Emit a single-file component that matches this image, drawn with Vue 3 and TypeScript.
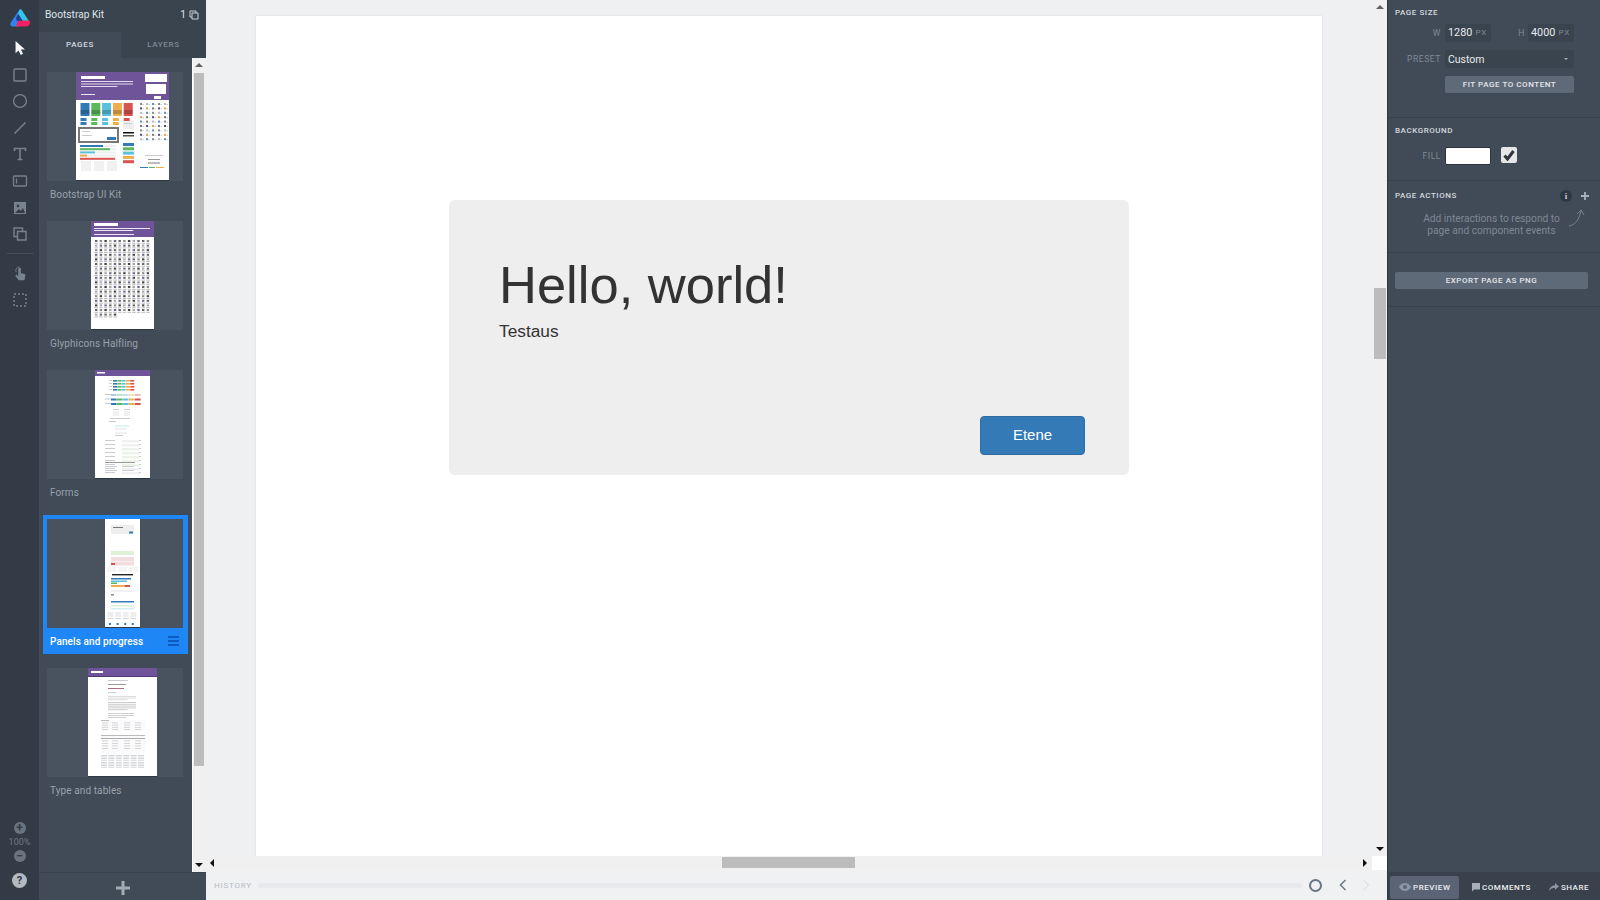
<script setup lang="ts">
type Box = [number, number, number, number, string];

type PageItem = {
  name: string;
  width: number;
  boxes: Box[];
  selected?: boolean;
};

const PURPLE = '#6f5499';
const BLUE = '#337ab7';
const GREEN = '#5cb85c';
const CYAN = '#5bc0de';
const ORANGE = '#f0ad4e';
const RED = '#d9534f';
const LINE = '#c9ccd1';
const PALE = '#f1f1f1';

function lines(x: number, y: number, w: number, count: number, step: number, color: string): Box[] {
  const out: Box[] = [];
  for (let i = 0; i < count; i++) {
    out.push([x, y + i * step, i === count - 1 ? w * 0.7 : w, 1, color]);
  }
  return out;
}

function kitThumb(): Box[] {
  const out: Box[] = [
    [0, 0, 93, 28, PURPLE],
    [5, 4, 24, 3, '#ffffff'],
    ...lines(5, 9, 52, 3, 2.5, '#e4dcf0'),
    [5, 22, 14, 1, '#efe9f6'],
    [69, 2, 22, 8, '#ffffff'],
    [70, 12, 20, 10, '#ffffff'],
    [78, 24, 7, 3, '#ffffff'],
  ];
  [BLUE, GREEN, CYAN, ORANGE, RED].forEach((color, i) => {
    const x = 4.5 + i * 10.8;
    out.push([x, 31, 9, 13, color], [x, 38, 9, 4, '#00000033']);
    out.push([x, 46, 6, 3, color], [x, 50, 6, 3, color]);
  });
  out.push(
    [2, 55, 41, 16, '#777777'],
    [4, 57, 37, 12, '#ffffff'],
    [6, 59, 8, 1, LINE],
    [6, 63, 10, 1, LINE],
    [31, 65, 9, 3, BLUE],
  );
  const bars: [string, number][] = [[BLUE, 23], [GREEN, 30], [CYAN, 15], [ORANGE, 7], [RED, 35]];
  bars.forEach(([color, w], i) => {
    out.push([4, 73 + i * 3.2, 36, 2, '#eeeeee'], [4, 73 + i * 3.2, w, 2, color]);
  });
  out.push([5, 89, 10, 10, PALE], [18, 89, 10, 10, PALE], [31, 89, 10, 10, PALE]);
  out.push([47, 49, 11, 8, '#eeeeee'], [48, 51, 8, 1, LINE], [47, 60, 11, 1.5, '#111111'], [47, 63, 11, 1.5, '#555555']);
  [BLUE, GREEN, CYAN, ORANGE, RED].forEach((color, i) => {
    out.push([47, 71 + i * 4.3, 11, 3, color]);
  });
  const dots = ['#888888', '#5a4a80', '#bbbbbb', '#d9a54e', '#5b90c0', '#777777'];
  for (let row = 0; row < 9; row++) {
    for (let col = 0; col < 5; col++) {
      out.push([64 + col * 6, 31 + row * 4.4, 2, 2, dots[(row + col * 2) % dots.length]]);
      out.push([66.5 + col * 6, 32 + row * 4.4, 1.5, 1, LINE]);
    }
  }
  out.push(
    [69, 83, 18, 1, LINE],
    [72, 87, 12, 1, '#999999'],
    [72, 90, 12, 2, '#bbbbbb'],
    [64, 95, 8, 1, BLUE],
    [73, 95, 6, 1, GREEN],
    [80, 95, 8, 1, ORANGE],
  );
  return out;
}

function glyphThumb(): Box[] {
  const out: Box[] = [
    [0, 0, 63, 16, PURPLE],
    [3, 2, 24, 3, '#ffffff'],
    ...lines(3, 7, 56, 2, 2, '#ede7f5'),
    [3, 13, 40, 1, '#ede7f5'],
  ];
  const colors = ['#666666', '#8b8b8b', '#444444', '#a5a5a5', '#70688a'];
  for (let row = 0; row < 17; row++) {
    const cols = row === 16 ? 5 : 12;
    for (let col = 0; col < cols; col++) {
      out.push([4 + col * 4.7, 19 + row * 4.6, 2.4, 2, colors[(row * 3 + col) % colors.length]]);
      out.push([3.5 + col * 4.7, 21.8 + row * 4.6, 3.6, 1, '#b9b9b9']);
    }
  }
  return out;
}

function formsThumb(): Box[] {
  const out: Box[] = [[0, 0, 55, 6, PURPLE], [2, 2, 8, 1.5, '#ffffff']];
  const row = [BLUE, GREEN, CYAN, ORANGE, RED];
  for (let r = 0; r < 4; r++) {
    out.push([14, 10 + r * 3, 3, 1, LINE]);
    row.forEach((color, i) => out.push([18 + i * 4.3, 10 + r * 3, 4, 1.6, color]));
  }
  for (let r = 0; r < 3; r++) {
    out.push([10, 24 + r * 4.5, 6, 1, LINE]);
    row.forEach((color, i) => out.push([16 + i * 6, 24 + r * 4.5, 5.6, 2, r === 0 ? color + '66' : color]));
  }
  out.push(
    [18, 39, 6, 1, LINE], [18, 41, 6, 5, PALE], [29, 39, 6, 1, LINE], [29, 41, 6, 5, PALE],
    [15, 48, 20, 1, LINE], [14, 51, 7, 1, LINE], [20, 55, 14, 2, '#e3f2fa'], [20, 58, 12, 2, PALE],
    [20, 62, 12, 2, PALE], [20, 65, 8, 1, LINE],
  );
  for (let r = 0; r < 9; r++) {
    out.push([10, 70 + r * 4, 10, 1, LINE]);
    out.push([27, 70 + r * 4, 18, 2.4, r > 1 && r < 7 ? '#ecf3e8' : PALE]);
    out.push([44, 70 + r * 4, 2, 1, LINE]);
  }
  out.push([10, 92, 30, 1, '#999999'], [10, 96, 12, 1, LINE], [27, 96, 12, 1, LINE], [10, 100, 12, 1, LINE], [27, 100, 12, 1, LINE]);
  return out;
}

function panelsThumb(): Box[] {
  const out: Box[] = [
    [6, 6, 23, 9, '#eeeeee'],
    [8, 8, 10, 1, '#777777'],
    [24, 12.5, 4, 2, BLUE],
    [6, 32, 23, 4, '#dff0d8'],
    [6, 38, 23, 4, '#f2dede'],
    [6, 42.5, 23, 4, '#f2dede'],
    [6, 44, 4, 2, RED],
    [2, 48, 9, 5, '#f5f5f5'],
    [13, 48, 9, 5, '#f5f5f5'],
    [24, 48, 9, 5, '#f5f5f5'],
    [7, 55, 21, 1.4, '#222222'],
    [6, 59, 20, 1.5, BLUE],
    [6, 61.5, 16, 1.5, CYAN],
    [6, 63.5, 6, 1.5, GREEN],
    [6, 66, 14, 2, ORANGE],
    [20, 66, 5, 2, RED],
    [6, 71, 23, 2, PALE],
    [6, 75, 3, 1.5, '#888888'],
    [6, 82, 23, 1.5, BLUE],
    [6, 86, 23, 1.5, '#dff0d8'],
    [6, 89, 23, 1.5, '#d9edf7'],
  ];
  for (let i = 0; i < 4; i++) {
    out.push([2.5 + i * 7.6, 93, 6, 5, '#eeeeee'], [2.5 + i * 7.6, 99, 6, 0.8, LINE], [4 + i * 7.6, 104, 2, 2, BLUE]);
  }
  return out;
}

function tablesThumb(): Box[] {
  const out: Box[] = [
    [0, 0, 69, 8, PURPLE],
    [0, 8, 69, 1, '#4f3b75'],
    [3, 3, 12, 2, '#ffffff'],
    [20, 12, 20, 1, LINE],
    [20, 16, 18, 1, '#999999'],
    [20, 20, 16, 1, '#b06a8a'],
    [20, 24, 8, 1, LINE],
    ...lines(20, 28, 28, 3, 1.6, '#dddddd'),
    ...lines(20, 34, 28, 5, 1.8, '#cccccc'),
    ...lines(20, 45, 26, 3, 2, '#cfcfcf'),
    [13, 52, 44, 11, '#fafafa'],
    [13, 52, 8, 1, '#bbbbbb'],
    [13, 67, 44, 18, '#fafafa'],
    [13, 67, 44, 1, '#bbbbbb'],
    [13, 70, 44, 1, '#aaaaaa'],
  ];
  for (let r = 0; r < 4; r++) {
    [14, 24, 36, 47].forEach((x) => out.push([x, 54.5 + r * 2.2, 6, 0.8, LINE]));
    [14, 24, 36, 47].forEach((x) => out.push([x, 72.5 + r * 2.5, 6, 0.8, LINE]));
  }
  for (let block = 0; block < 2; block++) {
    for (let c = 0; c < 6; c++) {
      for (let r = 0; r < 4; r++) {
        out.push([13 + c * 7.4, 87 + block * 7 + r * 1.6, 6, 0.8, LINE]);
      }
    }
  }
  return out;
}

const pages: PageItem[] = [
  { name: 'Bootstrap UI Kit', width: 93, boxes: kitThumb() },
  { name: 'Glyphicons Halfling', width: 63, boxes: glyphThumb() },
  { name: 'Forms', width: 55, boxes: formsThumb() },
  { name: 'Panels and progress', width: 35, boxes: panelsThumb(), selected: true },
  { name: 'Type and tables', width: 69, boxes: tablesThumb() },
];
</script>

<template>
  <div class="app">
    <nav class="rail">
      <svg class="logo" viewBox="0 0 20 18" aria-hidden="true">
        <path d="M9.2 1 .8 13.6C-.4 15.6.8 17.5 3 17.5h5.5L13.5 6.2 11.6 1.6C11 .4 9.9.2 9.2 1Z" fill="#2f84f2" />
        <path d="M9.4.9c.9-1 2-.7 2.6.3l7 11H12.6L8 5Z" fill="#35c3e8" />
        <path d="M8 11.5h10.5c1.4 0 1.8 1.5 1.3 3-.6 1.8-1.9 3-3.8 3H6Z" fill="#f2215f" />
        <path d="M8.3 5 12.6 11.8H6.5L6.2 8.5Z" fill="#1e3f8a" />
      </svg>

      <div class="rail-tools">
        <svg viewBox="0 0 16 18" class="tool"><path d="M3 1v14l3.4-3.2 2.4 5 2.6-1.2-2.4-4.8h4.6Z" fill="#f4f6f8" /></svg>
        <svg viewBox="0 0 16 16" class="tool"><rect x="2" y="2" width="12" height="12" rx="1" fill="none" stroke="#788390" stroke-width="1.4" /></svg>
        <svg viewBox="0 0 16 16" class="tool"><circle cx="8" cy="8" r="6.4" fill="none" stroke="#788390" stroke-width="1.4" /></svg>
        <svg viewBox="0 0 16 16" class="tool"><path d="M2.5 13.5 13.5 2.5" stroke="#788390" stroke-width="1.5" fill="none" /></svg>
        <svg viewBox="0 0 16 16" class="tool"><path d="M2.5 5V2.5h11V5M8 2.5v11M5.5 13.5h5" stroke="#788390" stroke-width="1.6" fill="none" /></svg>
        <svg viewBox="0 0 16 16" class="tool"><rect x="1.5" y="3" width="13" height="10" rx="1" fill="none" stroke="#788390" stroke-width="1.3" /><path d="M4.5 5.5v5" stroke="#788390" stroke-width="1.3" /></svg>
        <svg viewBox="0 0 16 16" class="tool"><rect x="2" y="2" width="12" height="12" fill="#788390" /><circle cx="6" cy="6" r="1.4" fill="#323b46" /><path d="M3 13l4-4 2 2 2-3 2 5Z" fill="#323b46" /></svg>
        <svg viewBox="0 0 16 16" class="tool"><path d="M5.5 10.5H2V2h8.5v3.5M5.5 5.5H14V14H5.5Z" fill="none" stroke="#788390" stroke-width="1.4" /></svg>
      </div>
      <div class="rail-divider"></div>
      <div class="rail-tools rail-tools--lower">
        <svg viewBox="0 0 16 18" class="tool"><path d="M6 7V3.5a1.5 1.5 0 0 1 3 0V8l4 1c.8.2 1.2.9 1 1.7L13 16H6.5L3 11.5c-.6-1.4.8-2.2 1.8-1.3L6 11.5Z" fill="#788390" /><path d="M3.8 7A4 4 0 0 1 7.5 1" fill="none" stroke="#788390" stroke-width="1" /></svg>
        <svg viewBox="0 0 16 16" class="tool"><rect x="2" y="2" width="12" height="12" fill="none" stroke="#788390" stroke-width="1.5" stroke-dasharray="2 2" /></svg>
      </div>

      <div class="zoom">
        <span class="zoom-btn">+</span>
        <span class="zoom-value">100%</span>
        <span class="zoom-btn">&minus;</span>
      </div>
      <span class="help">?</span>
    </nav>

    <aside class="pages">
      <header class="pages-title">
        <span>Bootstrap Kit</span>
        <span class="pages-count">
          1
          <svg viewBox="0 0 10 10" aria-hidden="true"><path d="M3 7H1V1h6v2M3 3h6v6H3Z" fill="none" stroke="#c8cdd3" stroke-width="1" /></svg>
        </span>
      </header>
      <div class="tabs">
        <span class="tab tab--active">PAGES</span>
        <span class="tab">LAYERS</span>
      </div>
      <div class="pages-body">
        <ul class="page-list">
          <li
            v-for="page in pages"
            :key="page.name"
            class="page-item"
            :class="{ 'page-item--selected': page.selected }"
          >
            <div class="page-thumb">
              <svg :width="page.width" height="108" :viewBox="`0 0 ${page.width} 108`" aria-hidden="true">
                <rect :width="page.width" height="108" fill="#ffffff" />
                <g class="thumb-content">
                  <rect
                    v-for="(b, i) in page.boxes"
                    :key="i"
                    :x="b[0]"
                    :y="b[1]"
                    :width="b[2]"
                    :height="b[3]"
                    :fill="b[4]"
                  />
                </g>
              </svg>
            </div>
            <div class="page-name">
              <span>{{ page.name }}</span>
              <span v-if="page.selected" class="page-menu"><i></i><i></i><i></i></span>
            </div>
          </li>
        </ul>
        <div class="vbar vbar--list">
          <span class="arrow arrow--up"></span>
          <span class="vbar-thumb"></span>
          <span class="arrow arrow--down"></span>
        </div>
      </div>
      <footer class="pages-add">
        <svg viewBox="0 0 16 16" aria-hidden="true"><path d="M8 1v14M1 8h14" stroke="#a2aab4" stroke-width="3" /></svg>
      </footer>
    </aside>

    <main class="stage">
      <div class="stage-scroll">
        <div class="viewport">
          <section class="canvas-page">
            <div class="jumbotron">
              <h1>Hello, world!</h1>
              <p>Testaus</p>
              <button type="button" class="btn-primary">Etene</button>
            </div>
          </section>
        </div>
        <div class="vbar vbar--stage">
          <span class="arrow arrow--up"></span>
          <span class="vbar-thumb"></span>
          <span class="arrow arrow--down"></span>
        </div>
        <div class="hbar">
          <span class="arrow arrow--left"></span>
          <span class="hbar-thumb"></span>
          <span class="arrow arrow--right"></span>
        </div>
        <div class="corner"></div>
      </div>
      <div class="history">
        <span class="history-label">HISTORY</span>
        <span class="history-track"></span>
        <span class="history-dot"></span>
        <svg viewBox="0 0 8 12" class="history-nav"><path d="M6.5 1 1.5 6l5 5" fill="none" stroke="#6f7a88" stroke-width="1.5" /></svg>
        <svg viewBox="0 0 8 12" class="history-nav"><path d="M1.5 1l5 5-5 5" fill="none" stroke="#e3e5e8" stroke-width="1.5" /></svg>
      </div>
    </main>

    <aside class="inspector">
      <div class="inspector-body">
        <section class="group group--size">
          <h3>PAGE SIZE</h3>
          <div class="size-row">
            <label class="field-label">W</label>
            <span class="input"><b>1280</b><em>PX</em></span>
            <label class="field-label field-label--h">H</label>
            <span class="input"><b>4000</b><em>PX</em></span>
          </div>
          <div class="field-row">
            <label class="field-label">PRESET</label>
            <span class="select">Custom<i></i></span>
          </div>
          <div class="field-row">
            <span class="field-label"></span>
            <button type="button" class="panel-btn panel-btn--fit">FIT PAGE TO CONTENT</button>
          </div>
        </section>

        <section class="group group--bg">
          <h3>BACKGROUND</h3>
          <div class="field-row">
            <label class="field-label">FILL</label>
            <span class="swatch"></span>
            <span class="check">
              <svg viewBox="0 0 12 12" aria-hidden="true"><path d="M1.5 6.5 4.5 10 10.500 2" fill="none" stroke="#2d343c" stroke-width="3" /></svg>
            </span>
          </div>
        </section>

        <section class="group group--actions">
          <div class="actions-head">
            <h3>PAGE ACTIONS</h3>
            <span class="info">i</span>
            <svg class="plus" viewBox="0 0 10 10" aria-hidden="true"><path d="M5 1v8M1 5h8" stroke="#aab2bc" stroke-width="1.8" /></svg>
          </div>
          <div class="actions-hint">
            <p>Add interactions to respond to<br />page and component events</p>
            <svg class="hint-arrow" viewBox="0 0 17 20" aria-hidden="true"><path d="M1 18c6-1 10-6 12-15M9 6l4.2-4L16 7" fill="none" stroke="#78828f" stroke-width="1" /></svg>
          </div>
        </section>

        <section class="group group--export">
          <button type="button" class="panel-btn panel-btn--export">EXPORT PAGE AS PNG</button>
        </section>
      </div>

      <footer class="inspector-foot">
        <button type="button" class="foot-btn foot-btn--active">
          <svg viewBox="0 0 12 8" width="12" height="8"><path d="M0 4c1.5-2.6 3.5-4 6-4s4.5 1.4 6 4c-1.5 2.6-3.5 4-6 4S1.5 6.6 0 4Z" fill="#8d96a3" /><circle cx="6" cy="4" r="2" fill="#5a6474" /></svg>
          PREVIEW
        </button>
        <button type="button" class="foot-btn">
          <svg viewBox="0 0 8 9" width="8" height="9"><path d="M0 0h8v6.5H2L0 8.5Z" fill="#a6afba" /></svg>
          COMMENTS
        </button>
        <button type="button" class="foot-btn">
          <svg viewBox="0 0 10 8" width="10" height="8"><path d="M6 0l4 3.4-4 3.4V4.8C3.5 4.8 1.5 5.6 0 8c.3-3.5 2.5-5.6 6-5.8Z" fill="#8d96a3" /></svg>
          SHARE
        </button>
      </footer>
    </aside>
  </div>
</template>

<style scoped>
.app {
  display: grid;
  grid-template-columns: 39px 167px 1181px 213px;
  width: 1600px;
  height: 900px;
  overflow: hidden;
  font-family: Roboto, "Liberation Sans", sans-serif;
}

/* left tool rail */
.rail {
  display: flex;
  flex-direction: column;
  align-items: center;
  background: #323b46;
  padding-top: 9px;
}

.logo {
  width: 20px;
  height: 18px;
  display: block;
  flex: none;
  margin-bottom: 13px;
}

.rail-tools {
  display: flex;
  flex-direction: column;
  align-items: center;
  gap: 10.6px;
}

.tool {
  width: 16px;
  height: 16px;
  display: block;
}

.rail-divider {
  width: 26px;
  height: 1px;
  background: #48525e;
  margin: 11px 0 12px;
}

.rail-tools--lower {
  gap: 10px;
}

.zoom {
  margin-top: auto;
  display: flex;
  flex-direction: column;
  align-items: center;
  gap: 2px;
}

.zoom-btn {
  width: 12px;
  height: 12px;
  border-radius: 50%;
  background: #6a7480;
  color: #323b46;
  font-size: 12px;
  font-weight: 700;
  line-height: 12px;
  text-align: center;
}

.zoom-value {
  font-size: 9px;
  line-height: 12px;
  color: #6f7a87;
}

.help {
  width: 15px;
  height: 15px;
  margin: 11px 0 14px;
  border-radius: 50%;
  background: #b5bac0;
  color: #2d343d;
  font-size: 11px;
  font-weight: 700;
  line-height: 15px;
  text-align: center;
}

/* pages column */
.pages {
  display: flex;
  flex-direction: column;
  background: #414b57;
  min-height: 0;
}

.pages-title {
  height: 32px;
  flex: none;
  display: flex;
  align-items: center;
  justify-content: space-between;
  padding: 0 7px 3px 6px;
  box-sizing: border-box;
  background: #3a444f;
  color: #dfe3e7;
  font-size: 10.2px;
}

.pages-count {
  display: inline-flex;
  align-items: center;
  gap: 3px;
}

.pages-count svg {
  width: 10px;
  height: 10px;
}

.tabs {
  display: flex;
  height: 26px;
  flex: none;
  background: #3a444f;
}

.tab {
  flex: 1;
  text-align: center;
  font-size: 8px;
  font-weight: 500;
  letter-spacing: 0.7px;
  line-height: 26px;
  color: #7f8995;
}

.tab--active {
  flex: none;
  width: 82px;
  background: #414b57;
  color: #d8dce1;
}

.pages-body {
  flex: 1;
  min-height: 0;
  display: flex;
}

.page-list {
  flex: 1;
  min-width: 0;
  margin: 0;
  padding: 10px 0 0 4px;
  list-style: none;
  overflow: hidden;
}

.page-item {
  width: 145px;
  height: 139px;
  margin-bottom: 10px;
  padding: 4px 5px 0 4px;
  box-sizing: border-box;
}

.page-thumb {
  height: 109px;
  display: flex;
  justify-content: center;
  padding-left: 15px;
  background: #49535f;
  overflow: hidden;
}

.page-thumb svg {
  display: block;
  box-shadow: 0 1px 0 #2f3842;
}

.thumb-content {
  filter: blur(0.35px);
}

.page-name {
  display: flex;
  align-items: center;
  justify-content: space-between;
  height: 26px;
  padding: 0 0 0 3px;
  box-sizing: border-box;
  font-size: 10px;
  letter-spacing: 0.1px;
  color: #98a1ac;
}

.page-item--selected {
  background: #1f87f5;
}

.page-item--selected .page-name {
  color: #ffffff;
  font-weight: 500;
  padding: 0 4px 0 3px;
}

.page-menu {
  display: flex;
  flex-direction: column;
  gap: 2px;
}

.page-menu i {
  display: block;
  width: 11px;
  height: 2px;
  background: #0b5cc0;
}

/* native looking scrollbars */
.vbar {
  position: relative;
  flex: none;
  background: #f0f0f0;
  display: flex;
  flex-direction: column;
  align-items: stretch;
}

.vbar--list {
  width: 14px;
  border-left: 1px solid #ffffff;
  box-sizing: border-box;
  padding: 15px 2px 16px 1px;
}

.vbar--list .vbar-thumb {
  height: 693px;
  flex: none;
}

.vbar--list .arrow {
  left: calc(50% - 5px);
}

.vbar--stage {
  padding: 288px 1px 0 2px;
}

.vbar--stage .vbar-thumb {
  height: 71px;
  flex: none;
}

.vbar-thumb {
  display: block;
  background: #bcbcbc;
}

.arrow {
  position: absolute;
  width: 0;
  height: 0;
  border-style: solid;
  border-color: transparent;
}

.arrow--up {
  top: 5px;
  left: calc(50% - 4px);
  border-width: 0 4px 4px;
  border-bottom-color: #606060;
}

.arrow--down {
  bottom: 5px;
  left: calc(50% - 4px);
  border-width: 4px 4px 0;
  border-top-color: #111111;
}

.arrow--left {
  left: 4px;
  top: calc(50% - 4px);
  border-width: 4px 4px 4px 0;
  border-right-color: #111111;
}

.arrow--right {
  right: 5px;
  top: calc(50% - 4px);
  border-width: 4px 0 4px 4px;
  border-left-color: #111111;
}

.pages-add {
  height: 30px;
  flex: none;
  display: flex;
  align-items: center;
  justify-content: center;
  background: #414b57;
  border-top: 1px solid #38414c;
  box-sizing: border-box;
}

.pages-add svg {
  width: 16px;
  height: 16px;
}

/* stage */
.stage {
  display: flex;
  flex-direction: column;
  min-width: 0;
  background: #eff0f2;
}

.stage-scroll {
  flex: 1;
  min-height: 0;
  display: grid;
  grid-template-columns: 1fr 15px;
  grid-template-rows: 856px 14px;
}

.viewport {
  overflow: hidden;
  padding: 16px 0 0 50px;
}

.canvas-page {
  width: 1066px;
  height: 840px;
  padding: 184px 0 0 193px;
  box-sizing: border-box;
  background: #ffffff;
  box-shadow: 0 0 2px rgba(60, 70, 80, 0.12);
}

.jumbotron {
  width: 680px;
  height: 275px;
  display: flex;
  flex-direction: column;
  box-sizing: border-box;
  padding: 0 44px 20px 50px;
  background: #eeeeee;
  border-radius: 6px;
  font-family: "Liberation Sans", Arial, sans-serif;
}

.jumbotron h1 {
  margin: 53px 0 0;
  font-size: 52.5px;
  font-weight: 400;
  line-height: 64px;
  color: #333333;
}

.jumbotron p {
  margin: 4px 0 0;
  font-size: 17.3px;
  line-height: 20px;
  color: #333333;
}

.btn-primary {
  margin-top: auto;
  align-self: flex-end;
  width: 105px;
  height: 39px;
  padding: 0 0 2px;
  border: 1px solid #2e6da4;
  border-radius: 4px;
  background: #337ab7;
  color: #ffffff;
  font-family: inherit;
  font-size: 15px;
}

.hbar {
  position: relative;
  background: #f0f0f0;
  padding: 1px 0 0 516px;
}

.hbar-thumb {
  display: block;
  width: 133px;
  height: 11px;
  background: #bcbcbc;
}

.corner {
  background: #ffffff;
}

.history {
  height: 30px;
  flex: none;
  display: flex;
  align-items: center;
  padding: 0 17px 2px 8px;
  background: #eff1f3;
}

.history-label {
  width: 44px;
  font-size: 8px;
  letter-spacing: 0.8px;
  color: #b6bbc2;
}

.history-track {
  flex: 1;
  height: 5px;
  border-radius: 3px;
  background: #e7e9ec;
}

.history-dot {
  width: 9px;
  height: 9px;
  margin: 0 17px 0 7px;
  border: 2px solid #687483;
  border-radius: 50%;
}

.history-nav {
  width: 8px;
  height: 12px;
  margin-right: 15px;
}

.history-nav:last-child {
  margin-right: 0;
}

/* inspector */
.inspector {
  display: flex;
  flex-direction: column;
  background: #414b57;
  min-height: 0;
  border-left: 1px solid #2f3741;
  box-sizing: border-box;
}

.inspector-body {
  flex: 1;
  min-height: 0;
}

.group {
  border-bottom: 1px solid #38414c;
  padding: 0 12px 0 7px;
}

.group h3 {
  margin: 0;
  font-size: 8px;
  font-weight: 500;
  letter-spacing: 0.55px;
  line-height: 12px;
  color: #d5d9de;
}

.group--size {
  height: 118px;
  padding-top: 7px;
  box-sizing: border-box;
}

.size-row,
.field-row {
  display: flex;
  align-items: center;
}

.size-row {
  margin-top: 5px;
}

.field-row {
  margin-top: 8px;
}

.field-label {
  width: 50px;
  padding-right: 4px;
  box-sizing: border-box;
  text-align: right;
  font-size: 8.5px;
  letter-spacing: 0.6px;
  color: #7f8995;
  flex: none;
}

.field-label--h {
  width: 37px;
  padding-right: 3px;
}

.input {
  width: 46px;
  height: 18px;
  display: flex;
  align-items: center;
  justify-content: space-between;
  padding: 0 4px 1px 3px;
  box-sizing: border-box;
  background: #3a444f;
  border-radius: 2px;
}

.input b {
  font-size: 10.8px;
  font-weight: 400;
  color: #e8ebee;
}

.input em {
  font-style: normal;
  font-size: 8px;
  letter-spacing: 0.8px;
  color: #7f8995;
}

.select {
  position: relative;
  width: 129px;
  height: 18px;
  padding-left: 3px;
  box-sizing: border-box;
  background: #3a444f;
  border-radius: 2px;
  font-size: 10.5px;
  line-height: 19px;
  color: #e8ebee;
}

.select i {
  position: absolute;
  right: 6px;
  top: 8px;
  border-style: solid;
  border-width: 2px 2.5px 0;
  border-color: #aab2bc transparent transparent;
}

.panel-btn {
  border: 0;
  border-radius: 2px;
  background: #5f6a79;
  color: #e3e6ea;
  font-family: inherit;
  font-size: 8px;
  font-weight: 500;
  letter-spacing: 0.55px;
  height: 17px;
  padding: 0;
}

.panel-btn--fit {
  width: 129px;
}

.panel-btn--export {
  display: block;
  width: 193px;
}

.group--bg {
  height: 63px;
  padding-top: 7px;
  box-sizing: border-box;
}

.group--bg .field-row {
  margin-top: 10px;
  align-items: flex-start;
}

.group--bg .field-label {
  line-height: 18px;
}

.swatch {
  width: 46px;
  height: 18px;
  box-sizing: border-box;
  background: #ffffff;
  border: 1px solid #2d343c;
  border-radius: 2px;
}

.check {
  width: 16px;
  height: 16px;
  margin-left: 10px;
  display: flex;
  align-items: center;
  justify-content: center;
  background: #e4e6e8;
  border-radius: 2px;
}

.check svg {
  width: 12px;
  height: 12px;
}

.group--actions {
  height: 72px;
  padding-top: 9px;
  padding-right: 10px;
  box-sizing: border-box;
}

.actions-head {
  display: flex;
  align-items: center;
}

.actions-head h3 {
  flex: 1;
}

.info {
  width: 12px;
  height: 12px;
  border-radius: 50%;
  background: #2f3741;
  color: #c8cdd3;
  font-family: "Liberation Serif", serif;
  font-size: 9px;
  font-weight: 700;
  line-height: 12px;
  text-align: center;
}

.plus {
  width: 10px;
  height: 10px;
  margin-left: 8px;
}

.actions-hint {
  position: relative;
  margin-top: 11px;
}

.actions-hint p {
  margin: 0;
  padding-right: 2px;
  text-align: center;
  font-size: 10.2px;
  line-height: 12px;
  color: #7d8794;
}

.hint-arrow {
  position: absolute;
  right: 5px;
  top: -5px;
  width: 17px;
  height: 20px;
}

.group--export {
  height: 54px;
  padding-top: 19px;
  box-sizing: border-box;
}

.inspector-foot {
  height: 30px;
  flex: none;
  display: flex;
  align-items: center;
  padding-left: 2px;
  background: #38414c;
}

.foot-btn {
  display: inline-flex;
  align-items: center;
  gap: 2px;
  height: 23px;
  padding: 0 9px;
  border: 0;
  border-radius: 2px;
  background: transparent;
  color: #eceef1;
  font-family: inherit;
  font-size: 8px;
  font-weight: 500;
  letter-spacing: 0.55px;
}

.foot-btn svg {
  flex: none;
}

.foot-btn--active {
  width: 69px;
  padding: 0 6px 0 9px;
  background: #5a6474;
  margin-right: 4px;
}
</style>

<style>
html,
body {
  overflow: hidden;
  background: #323b46;
}
</style>
